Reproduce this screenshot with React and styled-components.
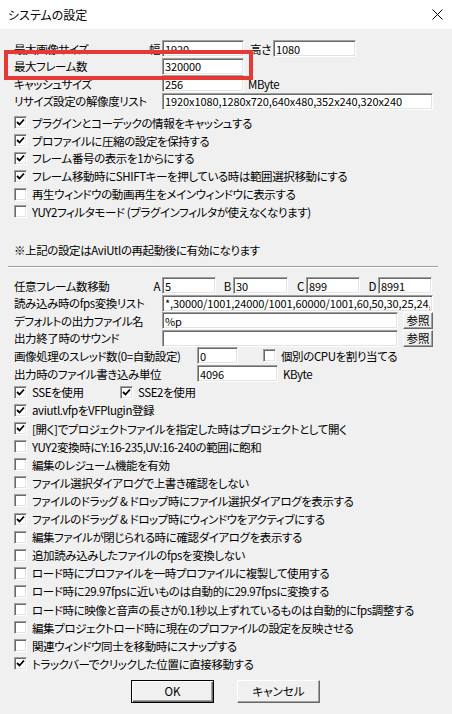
import React from 'react'
import styled, { createGlobalStyle } from 'styled-components'

const GlobalStyle = createGlobalStyle`
  html, body {
    margin: 0;
    padding: 0;
    background: #f0f0f0;
  }
  * {
    box-sizing: border-box;
  }
`

const font = `"Noto Sans CJK JP", "Liberation Sans", sans-serif`

const Window = styled.div`
  position: relative;
  width: 452px;
  height: 714px;
  background: #f0f0f0;
  font-family: ${font};
  font-size: 11.5px;
  font-feature-settings: 'palt';
  color: #000;
  overflow: hidden;
`

const TitleBar = styled.div`
  height: 29px;
  background: #fff;
  display: flex;
  align-items: center;
  justify-content: space-between;
  padding: 0 9px 0 8px;
  font-size: 12px;
`

const CloseIcon = styled.svg`
  width: 11px;
  height: 11px;
`

const Body = styled.div`
  padding: 11px 0 0 14px;
  display: flex;
  flex-direction: column;
`

const Section = styled.div`
  display: flex;
  flex-direction: column;
`

const Row = styled.div`
  display: flex;
  align-items: center;
  height: ${(p) => p.$h || 17.6}px;
  white-space: nowrap;
`

const Label = styled.span`
  display: inline-block;
  width: ${(p) => p.$w}px;
  flex: none;
  text-align: ${(p) => (p.$right ? 'right' : 'left')};
  padding-right: ${(p) => (p.$right ? 2 : 0)}px;
  letter-spacing: -0.4px;
`

const Text = styled.span`
  letter-spacing: -0.4px;
  margin-left: ${(p) => p.$ml || 0}px;
`

const Field = styled.input`
  width: ${(p) => p.$w}px;
  height: 17px;
  flex: none;
  margin-left: ${(p) => p.$ml || 0}px;
  padding: 0 2px;
  font-family: ${font};
  font-size: 11px;
  color: #000;
  background: #fff;
  border-top: 1px solid #a0a0a0;
  border-left: 1px solid #a0a0a0;
  border-right: 1px solid #fff;
  border-bottom: 1px solid #fff;
  box-shadow: inset 1px 1px 0 #696969, inset -1px -1px 0 #e3e3e3;
  outline: none;
  letter-spacing: -0.1px;
`

const BrowseButton = styled.button`
  width: 30px;
  height: 17px;
  margin-left: 5px;
  padding: 0;
  font-family: ${font};
  font-size: 11.5px;
  line-height: 1;
  color: #000;
  background: #f0f0f0;
  border-top: 1px solid #fff;
  border-left: 1px solid #fff;
  border-right: 1px solid #696969;
  border-bottom: 1px solid #696969;
  box-shadow: inset -1px -1px 0 #a0a0a0;
`

const Box = styled.span`
  width: 13px;
  height: 13px;
  flex: none;
  margin-left: ${(p) => p.$ml || 0}px;
  margin-right: 5px;
  background: #fff;
  border-top: 1px solid #a0a0a0;
  border-left: 1px solid #a0a0a0;
  border-right: 1px solid #fff;
  border-bottom: 1px solid #fff;
  box-shadow: inset 1px 1px 0 #696969, inset -1px -1px 0 #e3e3e3;
  display: flex;
  align-items: center;
  justify-content: center;
`

const Note = styled.div`
  height: 18px;
  display: flex;
  align-items: center;
  margin-top: 20px;
  letter-spacing: -0.4px;
`

const Separator = styled.div`
  height: 2px;
  margin: 7px 14px 9px -6px;
  border-top: 1px solid #a0a0a0;
  border-bottom: 1px solid #fff;
`

const ButtonBar = styled.div`
  display: flex;
  gap: 23px;
  margin: 7px 0 0 117px;
`

const DialogButton = styled.button`
  width: 83px;
  height: 23px;
  padding: 0;
  font-family: ${font};
  font-size: 11.5px;
  font-feature-settings: 'palt';
  color: #000;
  background: #f0f0f0;
  border-top: 1px solid ${(p) => (p.$default ? '#000' : '#fff')};
  border-left: 1px solid ${(p) => (p.$default ? '#000' : '#fff')};
  border-right: 1px solid ${(p) => (p.$default ? '#000' : '#696969')};
  border-bottom: 1px solid ${(p) => (p.$default ? '#000' : '#696969')};
  box-shadow: ${(p) =>
    p.$default
      ? 'inset 1px 1px 0 #fff, inset -1px -1px 0 #696969, inset -2px -2px 0 #a0a0a0'
      : 'inset -1px -1px 0 #a0a0a0'};
`

const Highlight = styled.div`
  position: absolute;
  left: 4px;
  top: 50px;
  width: 249px;
  height: 30px;
  border: 4px solid #e53935;
  pointer-events: none;
`

function Check({ checked, ml }) {
  return (
    <Box $ml={ml}>
      {checked ? (
        <svg width="9" height="9" viewBox="0 0 9 9">
          <polyline points="1,4 3.5,6.5 8,1.5" fill="none" stroke="#000" strokeWidth="1.8" />
        </svg>
      ) : null}
    </Box>
  )
}

function CheckRow({ checked, label, h }) {
  return (
    <Row $h={h}>
      <Check checked={checked} />
      <Text>{label}</Text>
    </Row>
  )
}

const upperChecks = [
  [true, 'プラグインとコーデックの情報をキャッシュする'],
  [true, 'プロファイルに圧縮の設定を保持する'],
  [true, 'フレーム番号の表示を1からにする'],
  [true, 'フレーム移動時にSHIFTキーを押している時は範囲選択移動にする'],
  [false, '再生ウィンドウの動画再生をメインウィンドウに表示する'],
  [false, 'YUY2フィルタモード (プラグインフィルタが使えなくなります)'],
]

const lowerChecks = [
  [true, 'aviutl.vfpをVFPlugin登録'],
  [true, '[開く]でプロジェクトファイルを指定した時はプロジェクトとして開く'],
  [false, 'YUY2変換時にY:16-235,UV:16-240の範囲に飽和'],
  [false, '編集のレジューム機能を有効'],
  [false, 'ファイル選択ダイアログで上書き確認をしない'],
  [false, 'ファイルのドラッグ & ドロップ時にファイル選択ダイアログを表示する'],
  [true, 'ファイルのドラッグ & ドロップ時にウィンドウをアクティブにする'],
  [false, '編集ファイルが閉じられる時に確認ダイアログを表示する'],
  [false, '追加読み込みしたファイルのfpsを変換しない'],
  [false, 'ロード時にプロファイルを一時プロファイルに複製して使用する'],
  [false, 'ロード時に29.97fpsに近いものは自動的に29.97fpsに変換する'],
  [false, 'ロード時に映像と音声の長さが0.1秒以上ずれているものは自動的にfps調整する'],
  [false, '編集プロジェクトロード時に現在のプロファイルの設定を反映させる'],
  [false, '関連ウィンドウ同士を移動時にスナップする'],
  [true, 'トラックバーでクリックした位置に直接移動する'],
]

export default function App() {
  return (
    <Window>
      <GlobalStyle />
      <TitleBar>
        <span>システムの設定</span>
        <CloseIcon viewBox="0 0 11 11">
          <path d="M0.5 0.5 L10.5 10.5 M10.5 0.5 L0.5 10.5" stroke="#000" strokeWidth="1" />
        </CloseIcon>
      </TitleBar>
      <Body>
        <Section>
          <Row $h={17.5}>
            <Label $w={134}>最大画像サイズ</Label>
            <Label $w={14} $right>幅</Label>
            <Field $w={82} defaultValue="1920" />
            <Label $w={29} $right>高さ</Label>
            <Field $w={83} defaultValue="1080" />
          </Row>
          <Row $h={17.5}>
            <Label $w={148}>最大フレーム数</Label>
            <Field $w={82} defaultValue="320000" />
          </Row>
          <Row $h={17.5}>
            <Label $w={148}>キャッシュサイズ</Label>
            <Field $w={82} defaultValue="256" />
            <Text $ml={4}>MByte</Text>
          </Row>
          <Row $h={17.5}>
            <Label $w={148}>リサイズ設定の解像度リスト</Label>
            <Field $w={271} defaultValue="1920x1080,1280x720,640x480,352x240,320x240" />
          </Row>
        </Section>
        <Section style={{ marginTop: 4 }}>
          {upperChecks.map(([checked, label]) => (
            <CheckRow key={label} checked={checked} label={label} h={17.8} />
          ))}
        </Section>
        <Note>※上記の設定はAviUtlの再起動後に有効になります</Note>
        <Separator />
        <Section>
          <Row>
            <Label $w={134}>任意フレーム数移動</Label>
            <Label $w={14} $right>A</Label>
            <Field $w={54} defaultValue="5" />
            <Label $w={17} $right>B</Label>
            <Field $w={55} defaultValue="30" />
            <Label $w={18} $right>C</Label>
            <Field $w={54} defaultValue="899" />
            <Label $w={18} $right>D</Label>
            <Field $w={54} defaultValue="8991" />
          </Row>
          <Row>
            <Label $w={148}>読み込み時のfps変換リスト</Label>
            <Field $w={271} defaultValue="*,30000/1001,24000/1001,60000/1001,60,50,30,25,24,20,15,12,10,5,1" />
          </Row>
          <Row>
            <Label $w={148}>デフォルトの出力ファイル名</Label>
            <Field $w={236} defaultValue="%p" />
            <BrowseButton>参照</BrowseButton>
          </Row>
          <Row>
            <Label $w={148}>出力終了時のサウンド</Label>
            <Field $w={236} defaultValue="" />
            <BrowseButton>参照</BrowseButton>
          </Row>
          <Row>
            <Label $w={183}>画像処理のスレッド数(0=自動設定)</Label>
            <Field $w={41} defaultValue="0" />
            <Check ml={25} />
            <Text>個別のCPUを割り当てる</Text>
          </Row>
          <Row>
            <Label $w={183}>出力時のファイル書き込み単位</Label>
            <Field $w={81} defaultValue="4096" />
            <Text $ml={5}>KByte</Text>
          </Row>
        </Section>
        <Section style={{ marginTop: 1 }}>
          <Row $h={18.1}>
            <Check checked />
            <Label $w={88}>SSEを使用</Label>
            <Check checked />
            <Text>SSE2を使用</Text>
          </Row>
          {lowerChecks.map(([checked, label]) => (
            <CheckRow key={label} checked={checked} label={label} h={18.1} />
          ))}
        </Section>
        <ButtonBar>
          <DialogButton $default>OK</DialogButton>
          <DialogButton>キャンセル</DialogButton>
        </ButtonBar>
      </Body>
      <Highlight />
    </Window>
  )
}
